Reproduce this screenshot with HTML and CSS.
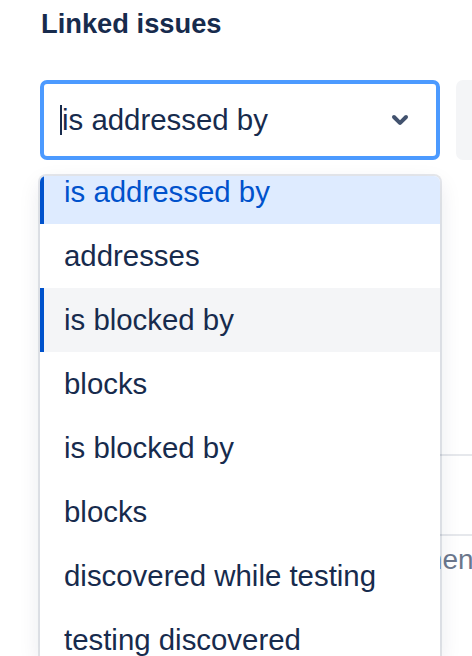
FILE: index.html
```html
<!DOCTYPE html>
<html lang="en">
<head>
<meta charset="utf-8">
<title>Linked issues</title>
<link rel="stylesheet" href="styles.css">
</head>
<body>
<div class="page">
  <h2 class="title">Linked issues</h2>
  <div class="row">
    <div class="select-wrap">
      <div class="select">
        <span class="value"><span class="caret"></span>is addressed by</span>
        <svg class="chev" viewBox="0 0 24 24" width="48" height="48" aria-hidden="true">
          <path fill="#42526E" d="M8.292 10.293a1.009 1.009 0 000 1.419l2.939 2.965c.218.215.5.322.779.322s.556-.107.769-.322l2.93-2.955a1.01 1.01 0 000-1.419.987.987 0 00-1.406 0l-2.298 2.317-2.307-2.327a.99.99 0 00-1.406 0z"/>
        </svg>
      </div>
      <div class="menu">
        <div class="menu-list">
          <div class="item selected">is addressed by</div>
          <div class="item">addresses</div>
          <div class="item hover">is blocked by</div>
          <div class="item">blocks</div>
          <div class="item">is blocked by</div>
          <div class="item">blocks</div>
          <div class="item">discovered while testing</div>
          <div class="item">testing discovered</div>
        </div>
      </div>
    </div>
    <div class="side-box"></div>
  </div>
  <div class="under">
    <div class="urow"></div>
    <div class="urow"></div>
    <div class="utext">Comment</div>
  </div>
</div>
</body>
</html>
```

FILE: styles.css
```css
html, body {
  margin: 0;
  padding: 0;
  background: #ffffff;
}
body {
  width: 472px;
  height: 656px;
  overflow: hidden;
  font-family: "Liberation Sans", Arial, sans-serif;
  color: #172B4D;
}
.page {
  padding-left: 40px;
  padding-top: 8px;
}
.title {
  margin: 0;
  font-size: 27.3px;
  line-height: 32px;
  font-weight: 700;
  color: #172B4D;
  padding-left: 1px;
}
.row {
  display: flex;
  gap: 16px;
  margin-top: 40px;
}
.select-wrap {
  position: relative;
  width: 400px;
  flex: none;
  z-index: 2;
}
.select {
  box-sizing: border-box;
  height: 80px;
  border: 4px solid #4C9AFF;
  border-radius: 7px;
  display: flex;
  align-items: center;
  justify-content: space-between;
  padding-left: 16px;
  padding-right: 12px;
  background: #fff;
}
.value {
  display: flex;
  align-items: center;
  font-size: 29.4px;
  color: #172B4D;
}
.caret {
  display: inline-block;
  width: 2px;
  height: 30px;
  background: #172B4D;
}
.chev {
  display: block;
  margin-top: -2px;
}
.side-box {
  flex: none;
  width: 100px;
  height: 80px;
  background: #F4F5F7;
  border-radius: 7px;
}
.menu {
  position: absolute;
  top: 96px;
  left: 0;
  width: 400px;
  height: 480px;
  overflow: hidden;
  background: #fff;
  border-radius: 6px 6px 0 0;
  box-shadow: 0 0 0 2px rgba(9, 30, 66, 0.1), 0 8px 22px rgba(9, 30, 66, 0.1);
}
.menu-list {
  margin-top: -16px;
}
.item {
  height: 64px;
  display: flex;
  align-items: center;
  padding-left: 24px;
  font-size: 29.4px;
  color: #172B4D;
}
.item.selected {
  background: #DEEBFF;
  color: #0052CC;
  box-shadow: inset 4px 0 0 #0052CC;
}
.item.hover {
  background: #F4F5F7;
  box-shadow: inset 4px 0 0 #0052CC;
}
.under {
  margin-top: 216px;
  position: relative;
  z-index: 1;
}
.urow {
  height: 78px;
  border-bottom: 2px solid #E6E8EC;
}
.utext {
  height: 48px;
  line-height: 48px;
  padding-left: 320px;
  font-size: 28px;
  color: #6B778C;
  white-space: nowrap;
}
```
